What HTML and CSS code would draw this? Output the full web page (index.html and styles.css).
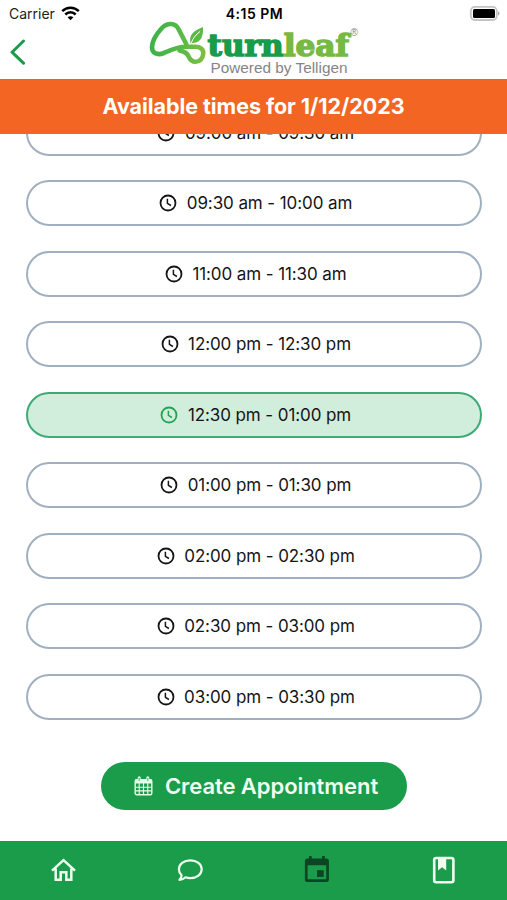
FILE: index.html
```html
<!DOCTYPE html>
<html lang="en">
<head>
<meta charset="utf-8">
<title>Available times</title>
<link rel="stylesheet" href="styles.css">
</head>
<body>
<svg class="defs" width="0" height="0" aria-hidden="true">
  <symbol id="clock" viewBox="0 0 18 18"><circle cx="9" cy="9" r="7.500" fill="none" stroke="currentColor" stroke-width="1.800"/><path d="M8.400 4.800v4.500l3.500 2.200" fill="none" stroke="currentColor" stroke-width="1.500"/></symbol>
</svg>
<div class="screen">
  <header class="header">
    <div class="status">
      <div class="carrier"><span>Carrier</span>
        <svg width="19" height="15" viewBox="0 0 19 15" fill="none" stroke="#000" stroke-width="2.5"><path d="M1.2 5.2C5.8.6 13.2.6 17.8 5.2"/><path d="M4.3 8.5c2.9-2.9 7.5-2.9 10.4 0"/><path d="M9.5 14.2L6.6 11.3c1.6-1.5 4.2-1.5 5.8 0z" fill="#000" stroke="none"/></svg>
      </div>
      <div class="time">4:15 PM</div>
      <svg class="battery" width="31" height="15" viewBox="0 0 31 15"><rect x="1.800" y=".8" width="26" height="13.2" rx="4.2" fill="#fff" stroke="#c4c4c4" stroke-width="1.8"/><rect x="4" y="3" width="22" height="9" rx="1.5"/><path d="M29 5.200q3 2.200 0 4.400z" fill="#aaa"/></svg>
    </div>
    <div class="nav">
      <svg class="back" width="17" height="27" viewBox="0 0 17 27"><path d="M14.500 2L3 13.200l11.500 11" fill="none" stroke="#1a9c4b" stroke-width="3" stroke-linecap="round" stroke-linejoin="round"/></svg>
      <svg class="logo" width="212" height="57" viewBox="148 20 212 57">
        <defs><linearGradient id="g" x1="150" y1="0" x2="206" y2="0" gradientUnits="userSpaceOnUse"><stop offset="0" stop-color="#38b34a"/><stop offset=".5" stop-color="#54b948"/><stop offset="1" stop-color="#80bf40"/></linearGradient></defs>
        <path d="M186.500 44.500L178.500 29C175 22.500 167 22.500 161.500 28.500C156.500 34 152 41 152 47.500C152 53.500 157.500 55.500 164 53C171 50 178 46.800 185 46.800H195C201 46.800 203.500 49.500 203.300 53.500C203 58.500 199.500 61.800 195.500 61.800C190 61.800 189.500 57.500 187.500 54.500C185.500 52 182.500 51 179.500 50.500" fill="none" stroke="url(#g)" stroke-width="4.600" stroke-linecap="round" stroke-linejoin="round"/>
        <path d="M190.500 43.500C188.500 34.500 193.500 31 203 27C203.500 36.500 201 42.500 193 43z" fill="#5bb947"/>
        <path d="M191 43.500C193 38 196 34.500 200 31.500" fill="none" stroke="#fff" stroke-width="1"/>
        <text class="word" x="207.500" y="55.700" textLength="141.500" lengthAdjust="spacingAndGlyphs"><tspan class="turn">turn</tspan><tspan class="leaf">leaf</tspan></text>
        <text class="reg" x="350.500" y="36">®</text>
        <text class="powered" x="210.500" y="72.500" textLength="137" lengthAdjust="spacingAndGlyphs">Powered by Telligen</text>
      </svg>
    </div>
  </header>
  <h1 class="banner"><span>Available times for 1/12/2023</span></h1>
  <main class="slots">
    <button class="slot"><svg><use href="#clock"/></svg><span>09:00 am - 09:30 am</span></button>
    <button class="slot"><svg><use href="#clock"/></svg><span>09:30 am - 10:00 am</span></button>
    <button class="slot"><svg><use href="#clock"/></svg><span>11:00 am - 11:30 am</span></button>
    <button class="slot"><svg><use href="#clock"/></svg><span>12:00 pm - 12:30 pm</span></button>
    <button class="slot selected"><svg><use href="#clock"/></svg><span>12:30 pm - 01:00 pm</span></button>
    <button class="slot"><svg><use href="#clock"/></svg><span>01:00 pm - 01:30 pm</span></button>
    <button class="slot"><svg><use href="#clock"/></svg><span>02:00 pm - 02:30 pm</span></button>
    <button class="slot"><svg><use href="#clock"/></svg><span>02:30 pm - 03:00 pm</span></button>
    <button class="slot"><svg><use href="#clock"/></svg><span>03:00 pm - 03:30 pm</span></button>
  </main>
  <div class="action">
    <button class="create">
      <svg width="19" height="20" viewBox="0 0 19 20"><rect x="1.200" y="3.700" width="16.600" height="15" rx="1.500" fill="none" stroke="#e9fbe9" stroke-width="1.400"/><path d="M1 3.500h17v4H1z" fill="#e9fbe9"/><path d="M5.200 7v11.500M9.500 7v11.500M13.800 7v11.500M1.500 11.200h16M1.500 14.900h16" stroke="#e9fbe9" stroke-width="1.100"/><path d="M5.200 1.800v3.500M13.800 1.800v3.500" stroke="#e9fbe9" stroke-width="3" stroke-linecap="round"/><path d="M5.200 2v3M13.800 2v3" stroke="#1a9c4b" stroke-width=".8"/></svg>
      <span>Create Appointment</span>
    </button>
  </div>
  <nav class="tabs">
    <a><svg width="28" height="28" viewBox="0 0 28 28" fill="none" stroke="#effff0" stroke-width="2.500"><path d="M3 14.700L14.500 4.200l11.500 10.500M6.700 12.500v11.300h5v-7.500h5.600v7.500h5V12.500"/></svg></a>
    <a><svg width="28" height="28" viewBox="0 0 28 28" fill="none" stroke="#effff0" stroke-width="2.200"><path d="M14.300 4.300c6.500 0 11.400 3.800 11.400 8.900s-4.900 8.900-11.400 8.900c-1.700 0-3.300-.3-4.800-.8-1.600 1.500-3.400 2.500-6 2.600 1.300-1.300 2-2.800 2.100-4.600-1.700-1.600-2.700-3.700-2.700-6.100 0-5.100 4.900-8.900 11.400-8.900z" stroke-linejoin="round"/></svg></a>
    <a><svg width="28" height="28" viewBox="0 0 28 28" fill="#0b4523"><path fill-rule="evenodd" d="M6 0h2.700v2.400h10.400V0h2.700v2.400h1.600q2.500 0 2.500 2.500v18.500q0 2.500-2.500 2.500h-19q-2.500 0-2.500-2.500v-18.500Q1.900 2.400 4.400 2.400H6zM4.600 9.200v14h18.600v-14z"/><path d="M14 14.200h6.700v6.700H14z"/></svg></a>
    <a><svg width="28" height="28" viewBox="0 0 28 28"><rect x="4.200" y="2" width="19.200" height="24.200" rx="2" fill="none" stroke="#effff0" stroke-width="2.600"/><path d="M8 2.500h8.200v12l-4.100-3.200L8 14.500z" fill="#effff0"/></svg></a>
  </nav>
</div>
</body>
</html>
```
FILE: styles.css
```css
* { box-sizing: border-box; }
body { margin: 0; background: #fff; font-family: Inter, "Liberation Sans", sans-serif; color: #151515; }
button { font: inherit; color: inherit; padding: 0; margin: 0; }
svg { display: block; flex: none; }
.defs { position: absolute; }
.screen { width: 507px; height: 900px; overflow: hidden; display: flex; flex-direction: column; }
.header { height: 79px; flex: none; }
.status { height: 20px; display: grid; grid-template-columns: 1fr auto 1fr; padding: 6px 7px 0 9px; color: #222; }
.carrier { display: flex; gap: 6px; font-size: 14px; line-height: 16px; letter-spacing: 0; }
.time { font-size: 14px; line-height: 16px; font-weight: 600; color: #000; letter-spacing: 0.5px; }
.battery { justify-self: end; }
.nav { display: flex; }
.back { margin: 19px 0 0 9px; }
.logo { margin-left: 122px; }
.word { font-family: "DejaVu Serif", serif; font-weight: 700; font-size: 30px; stroke-width: 1.5; }
.turn { fill: #169c4b; stroke: #169c4b; }
.leaf { fill: #76b943; stroke: #76b943; }
.reg { font-family: "Liberation Sans", sans-serif; font-size: 10px; fill: #888; }
.powered { font-family: "Liberation Sans", sans-serif; font-size: 15px; fill: #858585; }
.banner { margin: 0; height: 54.5px; flex: none; background: #f26522; border-top: 1px solid #b97350; color: #fff; display: flex; align-items: center; justify-content: center; font-size: 21.5px; font-weight: 700; letter-spacing: -0.06px; padding: 0 0 1px; }
.slots { height: 607px; flex: none; overflow: hidden; padding: 0 25.5px 0 26px; display: flex; flex-direction: column; gap: 24.5px; }
.slot { height: 46px; flex: none; border: 2px solid #a0b0c0; border-radius: 23px; background: #fff; display: flex; align-items: center; justify-content: center; gap: 9.5px; font-size: 17px; letter-spacing: -0.09px; padding-left: 4px; }
.slot:first-child { margin-top: -24px; }
.slot svg { width: 18px; height: 18px; }
.selected { background: #d1eddc; border-color: #3eaa76; }
.selected svg { color: #22a452; }
.action { padding-top: 21.5px; height: 100px; flex: none; display: flex; justify-content: center; align-items: flex-start; }
.create { width: 306px; height: 48px; border: 0; border-radius: 24px; background: #1a9c4b; color: #effff0; display: flex; align-items: center; justify-content: center; gap: 12px; font-size: 22px; font-weight: 600; letter-spacing: -0.06px; padding-left: 5px; }
.tabs { flex: 1; background: #1a9c4b; display: grid; grid-template-columns: repeat(4, 1fr); justify-items: center; padding-top: 15px; }
```
